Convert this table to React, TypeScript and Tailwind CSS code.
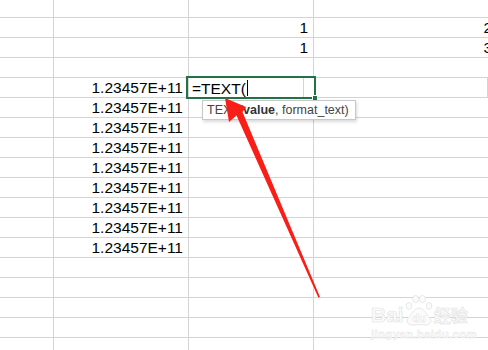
const VALUE = '1.23457E+11';

type Row = { a?: string; b?: string; c?: string; d?: string; active?: boolean };

const rows: Row[] = [
    {},
    { c: '1', d: '2' },
    { c: '1', d: '3' },
    {},
    { b: VALUE, active: true },
    { b: VALUE },
    { b: VALUE },
    { b: VALUE },
    { b: VALUE },
    { b: VALUE },
    { b: VALUE },
    { b: VALUE },
    { b: VALUE },
    {},
    {},
    {},
    {},
    {},
];

const cellBase =
    'border-b border-r border-[#d4d4d4] text-right pr-[5px] leading-[19px] whitespace-nowrap overflow-hidden';

const ActiveCell = () => (
    <div className="relative h-full w-[125px] border-b border-r border-[#d4d4d4] pl-[3px] text-left leading-[19px]">
        <span>=TEXT(</span>
        <span className="ml-px inline-block h-[16px] w-px translate-y-[2px] bg-black" />
        {/* selection border */}
        <div className="absolute left-[-3px] top-[-2px] h-[23px] w-[130px] border-2 border-[#217346]" />
        <div className="absolute left-[123px] top-[17px] h-[6px] w-[6px] border border-white bg-[#217346]" />
    </div>
);

const Arrow = () => (
    <svg className="pointer-events-none absolute left-0 top-0" width="488" height="350">
        <polygon
            points="225,98 246,107 242.5,112 320,297 318.3,297.6 236.5,115.5 229,122"
            fill="#f71f17"
        />
    </svg>
);

const Watermark = () => (
    <div className="pointer-events-none absolute left-[371px] top-[295px]">
        <div className="flex items-end">
            <span className="text-[21px] font-bold leading-[23px] [-webkit-text-stroke:0.6px_#e2e2e2] [color:#fbfbfb]">
                Bai
            </span>
            <svg width="28" height="31" viewBox="0 0 28 31" className="mx-px">
                <g fill="#fbfbfb" stroke="#e2e2e2" strokeWidth="0.8">
                    <ellipse cx="4" cy="11" rx="2.8" ry="3.4" />
                    <ellipse cx="10.5" cy="4" rx="3" ry="3.6" />
                    <ellipse cx="17.5" cy="4" rx="3" ry="3.6" />
                    <ellipse cx="24" cy="11" rx="2.8" ry="3.4" />
                    <path d="M14 13 C9 13 7 19 3 23 C0 27 4 31 9 30 C12 29.5 16 29.5 19 30 C24 31 28 27 25 23 C21 19 19 13 14 13 Z" />
                </g>
                <text
                    x="14"
                    y="27"
                    textAnchor="middle"
                    fontFamily="Liberation Sans, sans-serif"
                    fontWeight="700"
                    fontSize="11"
                    fill="#ffffff"
                    stroke="#e2e2e2"
                    strokeWidth="0.4"
                >
                    du
                </text>
            </svg>
            <span className="text-[17px] font-bold leading-[22px] [-webkit-text-stroke:0.6px_#e2e2e2] [color:#fbfbfb] [font-family:'Noto_Sans_CJK_SC',sans-serif]">
                经验
            </span>
        </div>
        <div className="mt-[2px] text-[11.5px] font-bold leading-[12px] tracking-[0.3px] [-webkit-text-stroke:0.4px_#e4e4e4] [color:#fbfbfb]">
            jingyan.baidu.com
        </div>
    </div>
);

export default function App() {
    return (
        <div className="relative h-[350px] w-[488px] overflow-hidden bg-white font-['Liberation_Sans',Arial,sans-serif] text-[15.5px] text-black">
            <div className="flex flex-col">
                {rows.map((row, i) => (
                    <div key={i} className={`flex ${i === 0 ? 'h-[18px]' : 'h-[20px]'}`}>
                        <div className={`${cellBase} w-[54px] shrink-0`}>{row.a}</div>
                        <div className={`${cellBase} w-[135px] shrink-0`}>{row.b}</div>
                        {row.active ? (
                            <ActiveCell />
                        ) : (
                            <div className={`${cellBase} w-[125px] shrink-0`}>{row.c}</div>
                        )}
                        <div className={`${cellBase} w-[184px] shrink-0`}>{row.d}</div>
                    </div>
                ))}
            </div>

            {/* function hint */}
            <div className="absolute left-[202px] top-[100px] flex h-[20px] w-[154px] items-center border border-[#c8c8c8] bg-white pl-[4px] text-[12.5px] text-[#444] shadow-[1px_2px_3px_rgba(0,0,0,0.15)]">
                TEXT(<b className="font-bold text-[#333]">value</b>, format_text)
            </div>

            <Arrow />
            <Watermark />
        </div>
    );
}
